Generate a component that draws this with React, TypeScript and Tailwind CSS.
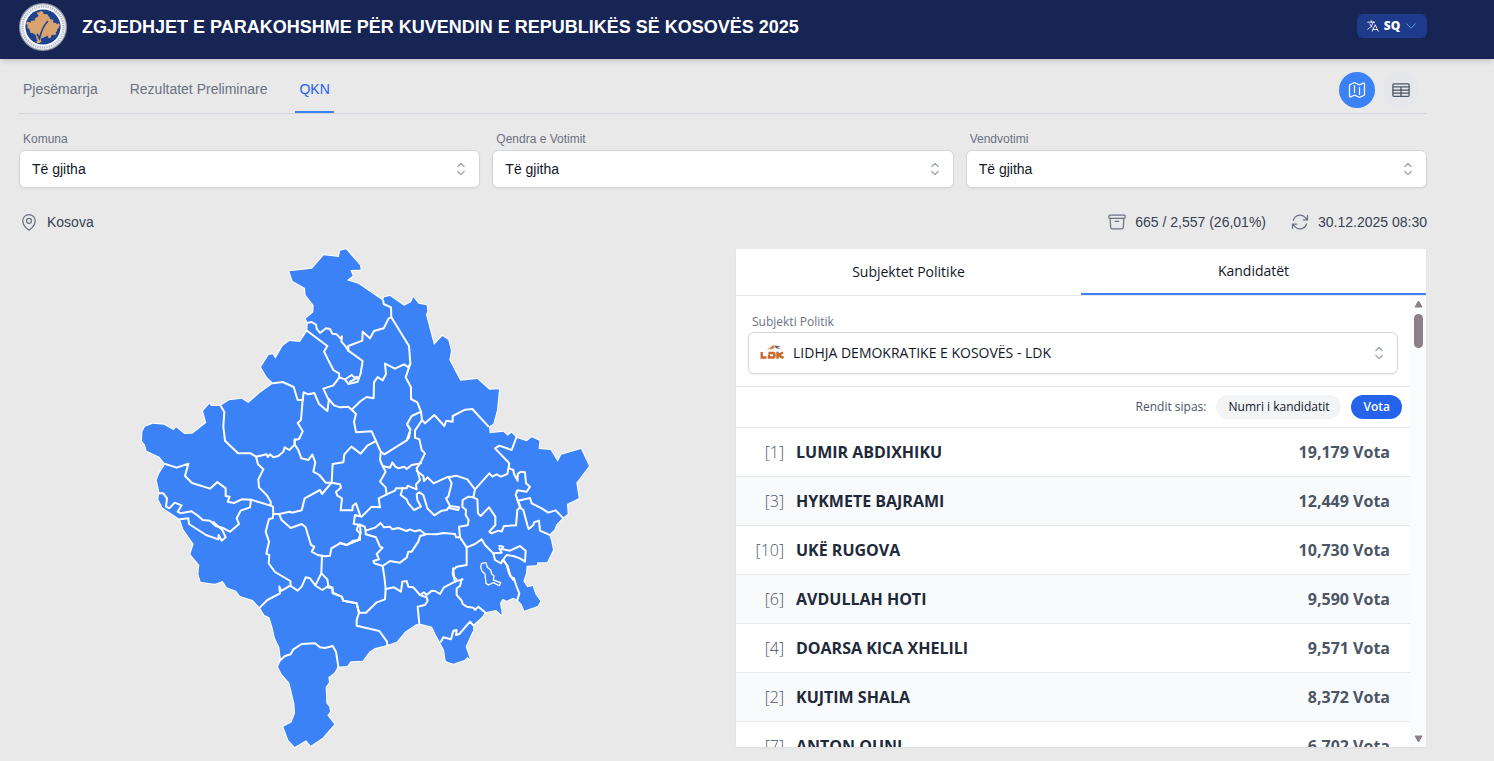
import {
  HiOutlineArchiveBox,
  HiOutlineArrowPath,
  HiOutlineChevronDown,
  HiOutlineChevronUpDown,
  HiOutlineLanguage,
  HiOutlineMap,
  HiOutlineMapPin,
  HiOutlineTableCells,
} from 'react-icons/hi2';

const tabs = ['Pjesëmarrja', 'Rezultatet Preliminare', 'QKN'];

const filters = [
  { id: 'komuna', label: 'Komuna' },
  { id: 'qendra', label: 'Qendra e Votimit' },
  { id: 'vendvotimi', label: 'Vendvotimi' },
];

const candidates = [
  { number: 1, name: 'LUMIR ABDIXHIKU', votes: '19,179' },
  { number: 3, name: 'HYKMETE BAJRAMI', votes: '12,449' },
  { number: 10, name: 'UKË RUGOVA', votes: '10,730' },
  { number: 6, name: 'AVDULLAH HOTI', votes: '9,590' },
  { number: 4, name: 'DOARSA KICA XHELILI', votes: '9,571' },
  { number: 2, name: 'KUJTIM SHALA', votes: '8,372' },
  { number: 7, name: 'ANTON QUNI', votes: '6,702' },
];

const outline =
  '478,94 546,86 581,46 627,51 630,32 648,28 690,76 692,89 661,90 668,107 651,121 685,131 720,155 760,183 762,172 780,168 822,197 843,187 850,172 866,191 890,196 892,212 888,224 912,315 937,288 955,300 963,332 958,360 991,422 1042,417 1078,449 1107,448 1101,510 1090,551 1077,559 1079,580 1120,575 1133,587 1145,578 1159,593 1190,604 1205,592 1228,602 1226,627 1262,630 1283,665 1294,644 1353,627 1377,678 1339,728 1346,775 1311,792 1313,822 1298,833 1278,855 1273,869 1257,884 1263,900 1269,930 1251,967 1222,967 1220,976 1190,977 1188,1000 1180,1024 1192,1042 1208,1038 1216,1062 1231,1084 1223,1098 1183,1112 1175,1093 1162,1079 1150,1073 1130,1082 1118,1076 1110,1090 1116,1125 1098,1110 1065,1117 1055,1132 1029,1155 1030,1170 1018,1195 1007,1220 1020,1258 1013,1250 1003,1260 970,1271 947,1263 942,1230 930,1207 918,1185 906,1160 875,1152 858,1153 825,1175 800,1205 772,1215 735,1224 718,1235 698,1262 662,1264 652,1278 623,1280 613,1298 595,1312 597,1327 587,1342 589,1390 598,1400 600,1415 592,1426 613,1453 578,1493 542,1517 528,1501 494,1521 475,1500 460,1460 485,1447 495,1420 493,1390 478,1328 455,1302 444,1280 453,1260 448,1222 435,1195 427,1160 418,1132 403,1125 390,1103 368,1080 330,1068 318,1052 290,1042 278,1023 255,1031 230,1028 212,1025 205,1002 208,975 181,943 191,912 160,868 150,838 98,803 85,778 88,755 80,720 88,700 106,672 88,650 50,632 45,615 36,602 37,575 45,560 68,551 102,554 131,571 138,562 163,582 187,581 229,548 219,513 238,491 243,498 270,498 298,481 335,476 355,489 390,458 430,430 410,410 393,381 416,345 428,343 436,356 458,318 478,303 510,306 532,272 533,248 527,236 550,217 551,196 527,165 525,144 488,123';

// municipality borders, grouped by the part of the map they start from
const northWest = [
  '533,248 545,246 558,254 560,266 570,279 588,265 600,267 607,281 620,283 632,296 636,289 634,305 645,317 655,332',
  '532,273 592,318 582,335 610,390 627,400 628,412 610,436 580,446 595,478',
  '655,332 698,363 692,400 683,425 655,432 645,418 628,412',
  '645,418 665,405 672,412 685,412 660,425',
  '430,430 458,426 491,441 503,480 518,480 521,457 535,463 553,459 567,492 592,513 597,478',
  '518,480 513,540 503,549 518,574 507,597 494,600 494,614',
  '597,478 612,496 630,502 655,500 665,509',
  '272,497 283,516 280,560 285,602',
];

const northEast = [
  '130,183 131,192 153,202 154,232 146,235 131,265 102,273 90,295 68,275 67,302 25,318 25,332',
  '154,232 207,318 211,370 197,412 213,442 213,477 232,487 243,515 246,540 255,550 283,525 313,558 319,542 338,545 338,528 375,509 397,507 445,559',
  '211,372 204,381 192,373 165,386 135,371 138,402 128,421 113,411 102,427 101,475 80,471 62,483 35,509',
  '35,509 48,522 42,545 48,577 95,574 108,603',
  '243,515 215,528 201,553 211,567 207,593 200,601',
  '246,540 225,572 225,593',
];

const west = [
  '285,122 324,160 362,160 378,170 410,163 413,171 420,163 430,172 445,168 460,155 464,142 478,150 494,134 494,118',
  '494,134 504,148 514,175 535,180 547,164 556,187 550,215 568,225 587,248 605,248 608,192 640,187 643,163 664,140 692,161 712,137 738,123',
  '378,170 384,193 400,208 385,238 387,262 410,285 422,305 422,317 429,320 430,342 447,342 480,335 485,338 515,331 524,295 570,270 576,282 603,250',
  '106,192 140,203 175,191 165,228 186,249 240,266 262,246 287,265 287,288 299,290 293,305 312,309 335,298 363,299 422,317',
  '88,280 100,280 111,295 108,320 118,325 134,308 155,316 143,335 152,340 185,334 205,348 218,360 240,362 257,378 277,383 290,390 300,395 327,372 320,355 332,332 360,322 363,299',
  '150,358 175,355 177,372 228,405 265,418 266,405 275,422 287,412 277,390 250,366',
  '430,342 428,355 417,357 407,395 417,425 409,461 418,465 416,490 435,516 481,543 482,556 455,572 448,560 450,580 412,600 390,622',
  '447,342 455,360 482,384 515,372 527,382 543,435 553,440 545,455 563,465 585,469 600,467 604,445 630,430 650,435 670,422 690,420 690,400 680,390 685,375',
  '605,248 630,253 633,263 618,275 622,287 636,295 632,331 667,331 668,318 678,310 691,348',
  '576,467 574,520 556,556 540,535 527,532 515,560 503,572 482,558',
  '574,520 592,538 595,558 577,570 558,558',
  '595,558 607,562 609,578 635,590 640,602 680,610 687,638',
];

const east = [
  '108,123 122,155 133,163 200,121 211,90 201,73',
  '225,92 225,113 238,118 245,150 255,160 243,185 230,205',
  '122,160 120,180 128,198 150,203 157,187 166,200 175,205 193,200 200,207 215,195 243,190',
  '128,198 137,215 120,245 137,262 140,283 116,295 120,322 95,320 65,350 45,345 41,372 60,374 74,380 77,392 105,383 122,369 132,382 150,380 157,388 175,384 200,393 210,388 225,394 240,390 255,402 290,403 310,399 345,402 348,412 360,412 357,380 383,376 386,360 377,345 378,330 367,320 368,300 385,290 400,292 405,268',
  '140,283 165,272 168,265 200,265 203,257 215,262 230,268 228,253 240,240 230,205',
  '188,264 182,285 200,298 205,310 222,330 243,320 232,300 230,282 238,277 250,285 262,325 283,346 305,332 320,330 330,318 357,322 355,330 330,325',
  '230,212 250,228 252,243 263,232 281,250 325,230 335,250 325,290 318,295 330,318',
  '325,232 348,227 382,238 405,268 448,220 457,230 470,223 483,230 502,222 508,190 465,145 478,137 515,150 529,113',
  '400,292 412,298 414,340 422,348 447,322 466,350 466,375 448,395 455,400 475,392 485,395 492,378 528,376 532,330 540,322 532,300',
  '508,205 520,210 522,222 533,242 533,222 542,215 555,217 558,250 570,260 560,275 532,271 527,285 534,302 570,294 575,310 605,325 625,338 647,331 668,353',
  '534,302 543,325 550,330 562,375 566,387 580,375 582,367 597,362 600,392 627,404',
  '360,412 380,442 405,432 425,418 435,435 460,460 465,480 483,490 490,480 500,495 507,520 520,540',
  '380,442 380,495 350,500 340,510 342,530 350,538',
  '478,438 490,440 485,447 510,452 540,438 557,452 555,485 540,475 520,468 500,465 485,485',
  '460,460 485,458 478,445',
  '77,392 77,403 108,412 120,440 128,443 110,462 117,478 100,483 103,490 128,498 150,483 180,488 200,473 205,455 215,455 235,425 240,408 255,404',
  '60,374 62,400 55,420 20,435 0,428',
  '128,498 133,530 137,567',
];

const south = [
  '262,82 277,85 278,100 305,110 310,122 350,130 357,158 350,180 350,197 418,213 441,245 442,256',
  '357,158 378,158 410,127 435,118 437,87',
  '437,87 462,82 483,95 487,65 500,63 505,80 520,82 540,105 560,112 563,122 555,135 533,140 538,192',
  '540,105 552,97 560,105 575,92 585,93 600,102 612,82 645,65 668,58',
  '645,65 638,40 640,25',
  '665,58 660,78 650,85 650,105 665,122 668,132 680,140 700,143 705,150 715,140 735,157',
  '603,245 610,232 633,238 640,212 650,210 648,225 658,222 690,185 699,195',
  '118,303 135,288 152,283 160,268 185,252 225,250 240,262 255,264 278,258 288,275 295,320',
  '790,0 803,18 812,50 822,55 828,75 838,100 832,119',
];

function Borders({ lines }: { lines: string[] }) {
  return lines.map((points) => <polyline key={points} points={points} />);
}

function KosovoMap() {
  return (
    <svg viewBox="0 0 1410 1530" className="h-[510px] w-[470px]" role="img" aria-label="Kosova">
      <g fill="none" stroke="#fff" strokeWidth="6" strokeLinejoin="round" strokeLinecap="round">
        <polygon points={outline} fill="#3b82f6" paintOrder="stroke" />
        <Borders lines={northWest} />
        <g transform="translate(630 0)">
          <Borders lines={northEast} />
        </g>
        <g transform="translate(0 480)">
          <Borders lines={west} />
        </g>
        <g transform="translate(630 480)">
          <Borders lines={east} />
        </g>
        <g transform="translate(330 960)">
          <Borders lines={south} />
          <polygon
            points="722,20 725,10 738,8 742,22 752,30 755,42 762,48 760,60 782,68 778,77 760,68 745,75 738,70 735,42 725,32"
            strokeWidth="4"
          />
        </g>
      </g>
    </svg>
  );
}

function Seal() {
  return (
    <svg viewBox="0 0 48 48" className="size-12 shrink-0" aria-hidden="true">
      <circle cx="24" cy="24" r="24" fill="#8f96a8" />
      <circle cx="24" cy="24" r="22.8" fill="#eceef3" />
      <circle cx="24" cy="24" r="20.6" fill="none" stroke="#a3a9ba" strokeWidth="2" strokeDasharray="1 1.3" />
      <circle cx="24" cy="24" r="18.8" fill="#fff" />
      <circle cx="24" cy="24" r="17.6" fill="#1f428f" />
      <svg x="7" y="8" width="34" height="32" viewBox="0 0 1410 1530" preserveAspectRatio="none">
        <polygon points={outline} fill="#d9a46f" stroke="#d9a46f" strokeWidth="50" />
      </svg>
      <path d="M18 31l2.500 4.500C22 29 25 22 29 18" fill="none" stroke="#1f428f" strokeWidth="1.600" />
    </svg>
  );
}

function PartyLogo() {
  return (
    <svg viewBox="0 0 24 16" className="h-4 w-6" aria-hidden="true">
      <path d="M6 6.500L11 3l2-2 1.500 1-1 1.500 3.500-1-5 2.800-3-.3z" fill="#d97a3a" />
      <path d="M14 1.500l7 .8-3.500 1.200 4 1.800-5-.8z" fill="#6b6470" />
      <path
        d="M1.700 8v5.500H6.500M8.500 9h4.500q1.500 0 1.500 2.200T13 13.500H9V10.500M17.500 7.800v7M23 8.500l-5 2.700 5.500 2.700"
        fill="none"
        stroke="#c96a2b"
        strokeWidth="2.400"
      />
    </svg>
  );
}

export default function App() {
  return (
    <div className="min-h-[761px] bg-[#e9e9e9] font-['Liberation_Sans',Arial,sans-serif] text-sm text-gray-700">
      <header className="flex h-[59px] items-start justify-between bg-[#172554] pt-[3px] pr-[67px] pl-[19px] shadow-md">
        <div className="flex items-center gap-[15px]">
          <Seal />
          <h1 className="text-lg font-bold text-white">
            ZGJEDHJET E PARAKOHSHME PËR KUVENDIN E REPUBLIKËS SË KOSOVËS 2025
          </h1>
        </div>
        <button
          type="button"
          className="mt-[11px] flex h-6 w-[70px] items-center justify-center gap-1 rounded-md bg-[#1e3a8a] font-['Open_Sans',sans-serif] text-xs font-extrabold text-white"
        >
          <HiOutlineLanguage className="size-3.5" />
          SQ
          <HiOutlineChevronDown className="size-3.5 text-[#60a5fa]" />
        </button>
      </header>

      <main className="pr-[67px] pl-[19px]">
        <div className="flex h-[55px] items-end justify-between border-b border-gray-300">
          <nav className="flex gap-6">
            {tabs.map((tab) => (
              <a
                key={tab}
                href="#"
                aria-current={tab === 'QKN' ? 'page' : undefined}
                className="border-b-2 border-transparent px-1 pb-3 leading-5 text-gray-500 aria-[current=page]:border-[#3b82f6] aria-[current=page]:text-[#2563eb]"
              >
                {tab}
              </a>
            ))}
          </nav>
          <div className="mr-2 mb-[5px] flex gap-2">
            <button
              type="button"
              aria-label="Harta"
              className="flex size-9 items-center justify-center rounded-full bg-[#3b82f6] text-white"
            >
              <HiOutlineMap className="size-5" />
            </button>
            <button
              type="button"
              aria-label="Tabela"
              className="flex size-9 items-center justify-center rounded-full bg-[#e5e7eb] text-gray-600"
            >
              <HiOutlineTableCells className="size-5" />
            </button>
          </div>
        </div>

        <div className="mt-[17px] grid grid-cols-3 gap-3">
          {filters.map((filter) => (
            <div key={filter.id}>
              <label htmlFor={filter.id} className="block px-1 pb-[3px] text-xs leading-4 text-gray-500">
                {filter.label}
              </label>
              <div className="relative">
                <select
                  id={filter.id}
                  className="h-[38px] w-full appearance-none rounded-md border border-gray-300 bg-white px-3 text-sm text-gray-900 shadow-xs"
                >
                  <option>Të gjitha</option>
                </select>
                <HiOutlineChevronUpDown className="pointer-events-none absolute inset-y-0 right-[9px] my-auto size-5 text-gray-400" />
              </div>
            </div>
          ))}
        </div>

        <div className="mt-6 flex items-center justify-between leading-5">
          <div className="flex items-center gap-2">
            <HiOutlineMapPin className="size-5 text-gray-500" />
            Kosova
          </div>
          <div className="flex items-center gap-6">
            <div className="flex items-center gap-2">
              <HiOutlineArchiveBox className="size-5 text-gray-500" />
              665 / 2,557 (26,01%)
            </div>
            <div className="flex items-center gap-2">
              <HiOutlineArrowPath className="size-5 text-gray-500" />
              30.12.2025 08:30
            </div>
          </div>
        </div>

        <div className="mt-2 grid grid-cols-2 gap-6">
          <div className="flex justify-center">
            <KosovoMap />
          </div>

          <section className="mx-px mt-[9px] flex h-[498px] flex-col overflow-hidden bg-white font-['Open_Sans','Noto_Sans',sans-serif] shadow-xs">
            <div className="grid h-[47px] shrink-0 grid-cols-2 border-b border-gray-200 font-medium text-gray-900">
              <button type="button">Subjektet Politike</button>
              <button type="button" className="border-b-2 border-[#3b82f6]">
                Kandidatët
              </button>
            </div>

            <div className="flex min-h-0 flex-1">
              <div className="min-w-0 flex-1 overflow-hidden">
                <div className="border-b border-gray-200 px-3 pt-[18px] pb-3">
                  <label htmlFor="subjekti" className="block px-1 pb-0.5 text-xs leading-4 text-gray-500">
                    Subjekti Politik
                  </label>
                  <div className="relative">
                    <select
                      id="subjekti"
                      className="h-[42px] w-full appearance-none rounded-md border border-gray-300 bg-white pr-9 pl-11 text-sm font-medium text-gray-900 shadow-xs"
                    >
                      <option>LIDHJA DEMOKRATIKE E KOSOVËS - LDK</option>
                    </select>
                    <div className="pointer-events-none absolute top-3 left-3">
                      <PartyLogo />
                    </div>
                    <HiOutlineChevronUpDown className="pointer-events-none absolute inset-y-0 right-[9px] my-auto size-5 text-gray-400" />
                  </div>
                </div>

                <div className="flex h-[41px] items-center justify-end border-b border-gray-200 pr-2 text-xs font-medium">
                  <span className="mr-2.5 text-gray-600">Rendit sipas:</span>
                  <button type="button" className="mr-2.5 h-6 rounded-full bg-gray-100 px-3 text-gray-900">
                    Numri i kandidatit
                  </button>
                  <button type="button" className="h-6 rounded-full bg-[#2563eb] px-3 font-semibold text-white">
                    Vota
                  </button>
                </div>

                <ul>
                  {candidates.map((candidate) => (
                    <li
                      key={candidate.number}
                      className="flex h-[49px] items-center border-b border-gray-200 pr-5 text-base even:bg-gray-50"
                    >
                      <span className="w-12 text-right font-light text-gray-600">[{candidate.number}]</span>
                      <span className="ml-3 flex-1 font-bold text-gray-800">{candidate.name}</span>
                      <span className="font-bold text-gray-600">{candidate.votes} Vota</span>
                    </li>
                  ))}
                </ul>
              </div>

              <div className="flex w-4 shrink-0 flex-col items-center bg-[#fafbfc] py-1" aria-hidden="true">
                <svg viewBox="0 0 9 8" className="h-2 w-[9px]">
                  <path d="M4.500 1l3.500 6H1z" fill="#8b7f88" stroke="#8b7f88" strokeLinejoin="round" />
                </svg>
                <div className="mt-1.5 h-[34px] w-[9px] rounded-full bg-[#8b7f88]" />
                <svg viewBox="0 0 9 8" className="mt-auto h-2 w-[9px]">
                  <path d="M4.500 7l3.500-6H1z" fill="#8b7f88" stroke="#8b7f88" strokeLinejoin="round" />
                </svg>
              </div>
            </div>
          </section>
        </div>
      </main>
    </div>
  );
}
